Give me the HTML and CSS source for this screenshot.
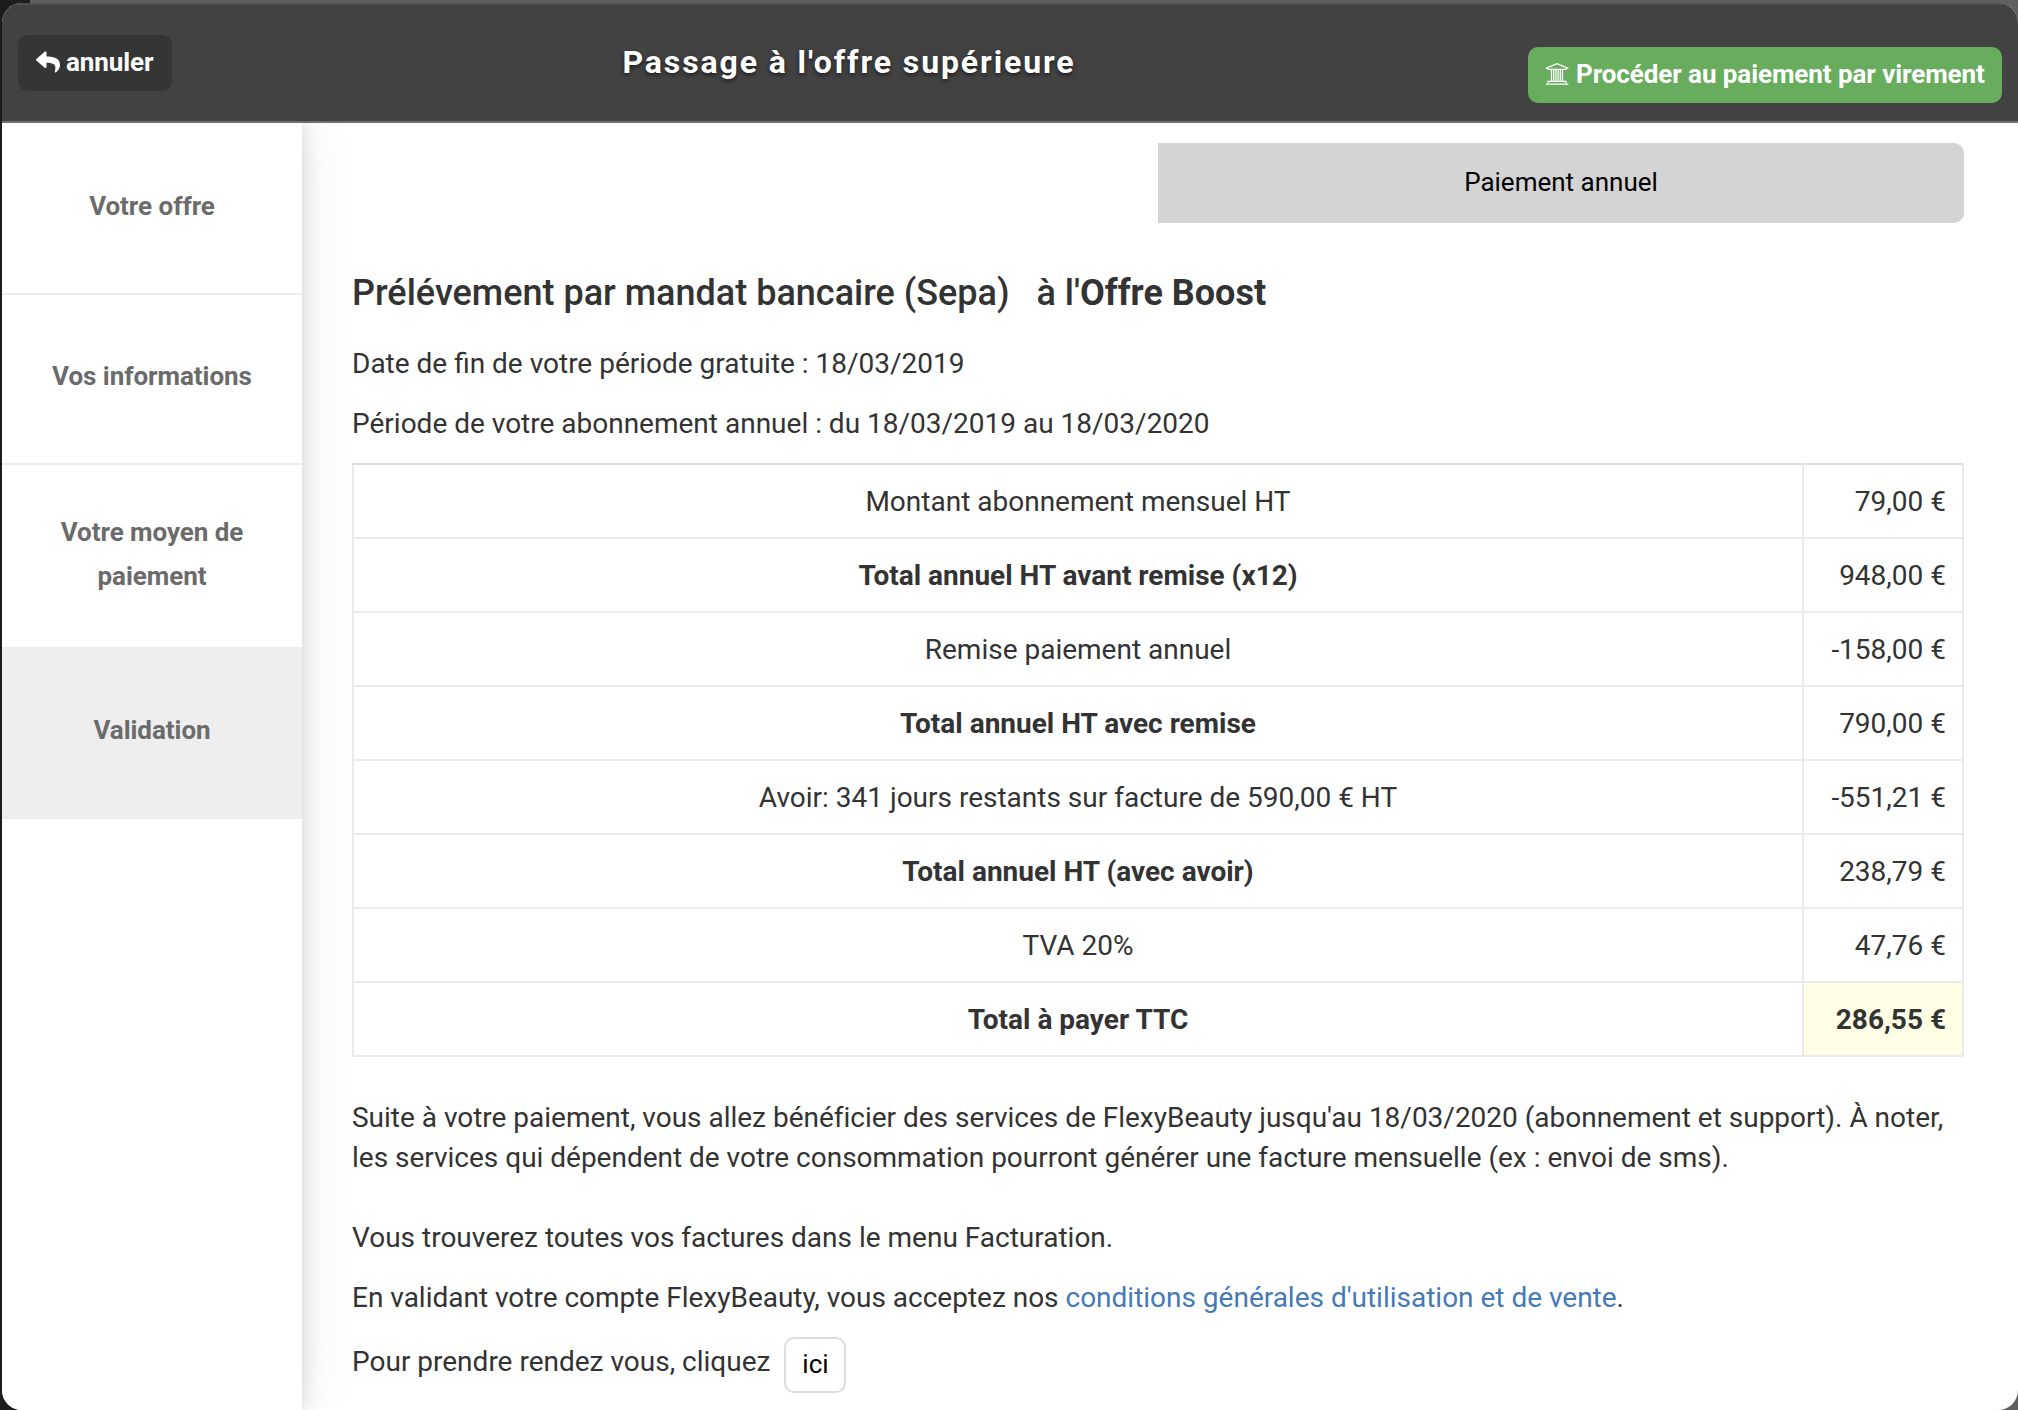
FILE: index.html
```
<!DOCTYPE html>
<html lang="fr">
<head>
  <meta charset="UTF-8" />
  <meta name="viewport" content="width=device-width, initial-scale=1.0"/>
  <title>Passage à l'offre supérieure</title>
  <link rel="stylesheet" href="styles.css">
</head>
<body>
<div class="modal">
  <!-- Header -->
  <header class="header">
    <button class="btn btn-cancel">
      <svg class="icon" viewBox="0 0 512 512" fill="currentColor"><path d="M8.3 189.8 184.300 37.800C199.700 24.500 224 35.300 224 56v80.100C384.600 137.900 512 170.100 512 322.300c0 61.400-39.600 122.300-83.300 154.100-13.700 9.900-33.100-2.500-28.100-18.600C446 312.800 379.100 274.200 224 272v88c0 20.700-24.300 31.500-39.700 18.200L8.300 226.200c-11.100-9.600-11.100-26.800 0-36.400z"/></svg>
      annuler
    </button>
    <h1 class="title">Passage à l'offre supérieure</h1>
    <button class="btn btn-pay">
      <svg class="icon" viewBox="0 0 24 24" fill="none" stroke="currentColor" stroke-width="1.300"><path d="M.8 6.400 12 1.700l11.200 4.700H21.500l-.6 1H3.100l-.6-1zM4.500 7v1M19.500 7v1M6.500 8v11M8.700 8v11M10.900 8v11M13.100 8v11M15.300 8v11M17.500 8v11M3 21v-1.700h18V21M.7 22.200h22.600"/></svg>
      Procéder au paiement par virement
    </button>
  </header>

  <div class="main">
    <!-- Sidebar -->
    <nav class="sidebar">
      <a class="step first">Votre offre</a>
      <a class="step second">Vos informations</a>
      <a class="step tall">Votre moyen de paiement</a>
      <a class="step active">Validation</a>
    </nav>

    <!-- Content -->
    <div class="content">
      <div class="tabs">
        <div class="tab">Paiement annuel</div>
      </div>

      <h2 class="offer">Prélévement par mandat bancaire (Sepa) &nbsp; à l'<b>Offre Boost</b></h2>
      <p>Date de fin de votre période gratuite : 18/03/2019</p>
      <p class="period">Période de votre abonnement annuel : du 18/03/2019 au 18/03/2020</p>

      <table class="amounts">
        <tr><td>Montant abonnement mensuel HT</td><td class="price">79,00 €</td></tr>
        <tr><th>Total annuel HT avant remise (x12)</th><td class="price">948,00 €</td></tr>
        <tr><td>Remise paiement annuel</td><td class="price">-158,00 €</td></tr>
        <tr><th>Total annuel HT avec remise</th><td class="price">790,00 €</td></tr>
        <tr><td>Avoir: 341 jours restants sur facture de 590,00 € HT</td><td class="price">-551,21 €</td></tr>
        <tr><th>Total annuel HT (avec avoir)</th><td class="price">238,79 €</td></tr>
        <tr><td>TVA 20%</td><td class="price">47,76 €</td></tr>
        <tr><th>Total à payer TTC</th><td class="price total">286,55 €</td></tr>
      </table>

      <p class="notice">Suite à votre paiement, vous allez bénéficier des services de FlexyBeauty jusqu'au 18/03/2020 (abonnement et support). À noter, les services qui dépendent de votre consommation pourront générer une facture mensuelle (ex : envoi de sms).</p>
      <p>Vous trouverez toutes vos factures dans le menu Facturation.</p>
      <p class="terms">En validant votre compte FlexyBeauty, vous acceptez nos <a href="#">conditions générales d'utilisation et de vente</a>.</p>
      <div class="meeting">
        <span>Pour prendre rendez vous, cliquez</span>
        <button class="btn btn-default">ici</button>
      </div>
    </div>
  </div>
</div>
</body>
</html>
```
FILE: styles.css
```
* {
  box-sizing: border-box;
}

body {
  margin: 0;
  height: 1410px;
  padding: 3px 0 0 2px;
  overflow: hidden;
  font-family: Roboto, sans-serif;
  font-size: 28px;
  line-height: 40px;
  color: #333;
  background: linear-gradient(to right, #1c1c1c 30px, #5f5f5f 30px);
}

.modal {
  height: 1407px;
  display: flex;
  flex-direction: column;
  border-radius: 20px;
  overflow: hidden;
  background: #fff;
}

.header {
  display: flex;
  align-items: flex-start;
  height: 120px;
  flex-shrink: 0;
  padding: 0 16px;
  background: #424242;
  border-top: 2px solid #4f4f4f;
  border-bottom: 2px solid #6f6d6e;
}

.btn {
  display: flex;
  align-items: center;
  height: 56px;
  padding: 0 18px 2px;
  border: 0;
  border-radius: 10px;
  font-family: inherit;
  font-size: 26px;
  white-space: nowrap;
}

.btn-cancel {
  width: 154px;
  margin-top: 30px;
  gap: 6px;
  font-weight: bold;
  letter-spacing: -0.08px;
  color: #fff;
  background: #353535;
}

.btn-pay {
  width: 474px;
  margin-top: 42px;
  padding: 0 17px 2px;
  gap: 7px;
  font-weight: bold;
  letter-spacing: -0.08px;
  color: #fff;
  background: #68ad5d;
}

.icon {
  width: 24px;
  height: 24px;
  flex-shrink: 0;
}

.title {
  flex: 1;
  margin: 37px 0 0;
  padding-right: 2px;
  font-size: 32px;
  font-weight: bold;
  line-height: 40px;
  letter-spacing: 1.9px;
  text-align: center;
  color: #fff;
  text-shadow: 0 2px 4px rgba(0, 0, 0, 0.6);
}

.main {
  display: flex;
  flex: 1;
  min-height: 0;
  overflow: hidden;
}

.sidebar {
  width: 300px;
  flex-shrink: 0;
  background: #fff;
  box-shadow: 0 0 60px rgba(0, 0, 0, 0.07), 0 0 20px rgba(0, 0, 0, 0.15);
}

.step {
  display: flex;
  align-items: center;
  justify-content: center;
  height: 170px;
  padding: 0 40px 4px;
  border-bottom: 2px solid #eee;
  font-size: 26px;
  font-weight: bold;
  line-height: 44px;
  letter-spacing: -0.05px;
  text-align: center;
  color: #6b6b6b;
}

.step.first,
.step.active {
  height: 172px;
}

.step.second {
  padding-bottom: 6px;
}

.step.tall {
  height: 182px;
  padding-bottom: 2px;
  border-bottom-color: #fff;
}

.step.active {
  background: #eee;
}

.content {
  flex: 1;
  padding: 20px 54px 0 50px;
}

.tabs {
  display: flex;
  justify-content: flex-end;
}

.tab {
  width: 806px;
  height: 80px;
  border-radius: 0 10px 10px 0;
  font-size: 26px;
  line-height: 78px;
  text-align: center;
  color: #000;
  background: #d4d4d4;
}

.offer {
  margin: 50px 0 31px;
  font-size: 36px;
  font-weight: 500;
  line-height: 40px;
}

p {
  margin: 0 0 20px;
}

p.period {
  margin-bottom: 19px;
}

a {
  color: #447ab7;
  text-decoration: none;
}

.amounts {
  width: 1612px;
  margin-bottom: 41px;
  border-collapse: collapse;
  table-layout: fixed;
}

.amounts td,
.amounts th {
  height: 74px;
  padding: 2px 16px 0;
  border: 2px solid #ebebeb;
  text-align: center;
}

.amounts tr:first-child td {
  border-top-color: #ddd;
}

.amounts .price {
  width: 160px;
  text-align: right;
}

.amounts .total {
  font-weight: bold;
  background: #ffffe5;
}

p.notice {
  margin-bottom: 40px;
  letter-spacing: -0.01px;
}

p.terms {
  margin-bottom: 19px;
  letter-spacing: -0.01px;
}

.meeting {
  display: flex;
  gap: 14px;
}

.meeting span {
  margin-top: 5px;
}

.btn-default {
  width: 62px;
  padding: 0 0 2px;
  justify-content: center;
  border: 2px solid #ddd;
  color: #000;
  background: #fff;
}
```
